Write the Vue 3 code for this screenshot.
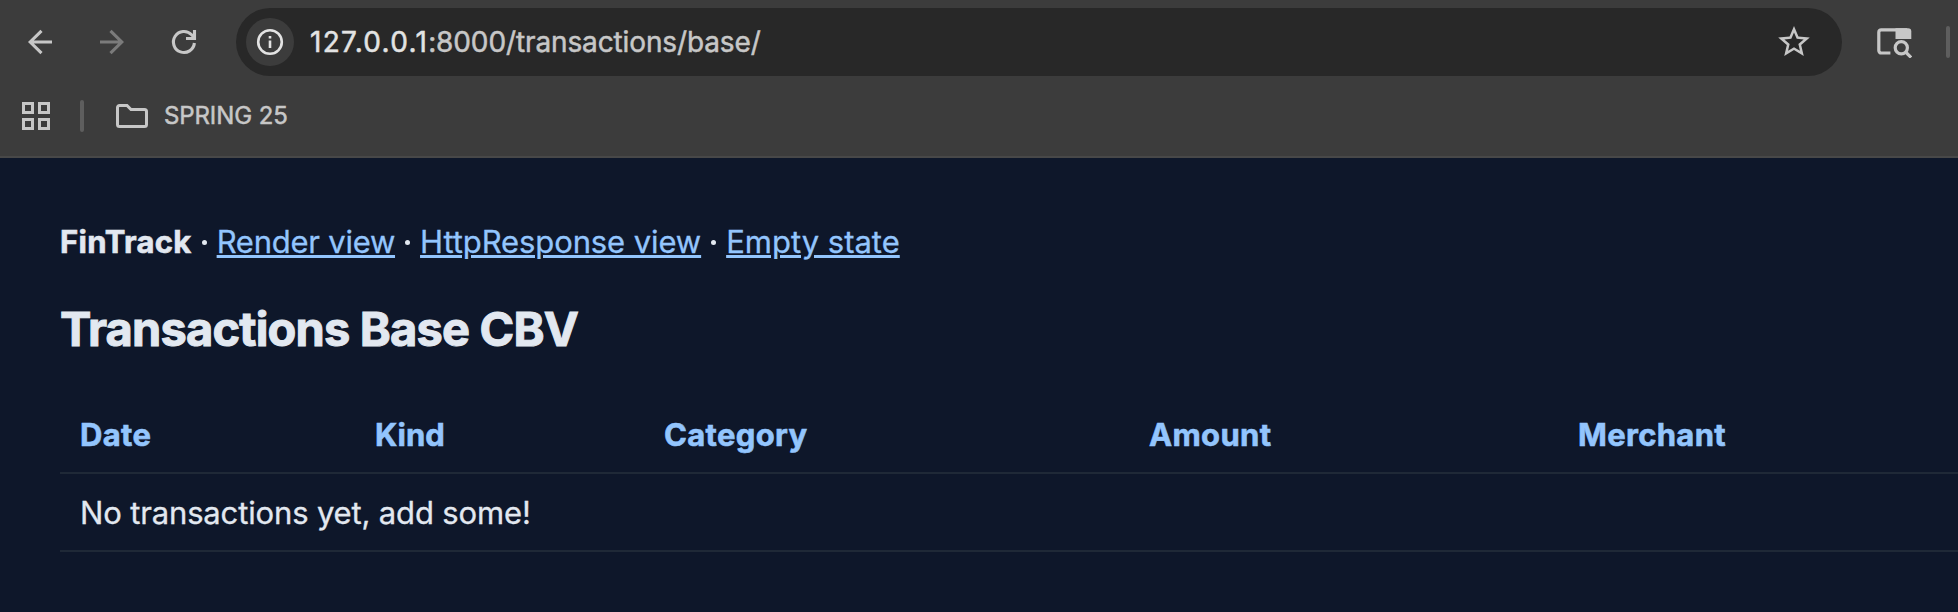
<script setup>
const links = [
  { label: 'Render view', cls: 'l1' },
  { label: 'HttpResponse view', cls: 'l2' },
  { label: 'Empty state', cls: 'l3' },
]
const columns = ['Date', 'Kind', 'Category', 'Amount', 'Merchant']
</script>

<template>
  <div class="window">
    <header class="chrome">
      <div class="toolbar">
        <svg class="nav-icon" viewBox="0 0 32 32"><path d="M28 16H6M17.5 4.8L6.2 16l11.3 11.2" /></svg>
        <svg class="nav-icon dim" viewBox="0 0 32 32"><path d="M4 16h22M14.5 4.8L25.8 16 14.5 27.2" /></svg>
        <svg class="nav-icon" viewBox="0 0 32 32"><path d="M26.4 17A10.5 10.5 0 1 1 23.6 8.8L26 11.3M26.5 4v8.5H18" /></svg>
        <div class="omnibox">
          <span class="site-info">
            <svg viewBox="0 0 28 28"><circle cx="14" cy="14" r="11.8" /><path d="M14 12.6v7.4M14 8v2.6" /></svg>
          </span>
          <span class="url"><span class="host">127.0.0.1</span><span>:8000/transactions/base/</span></span>
          <svg class="star" viewBox="2 2 20 19"><path d="M22 9.24l-7.19-.62L12 2 9.19 8.63 2 9.24l5.46 4.73L5.82 21 12 17.27 18.18 21l-1.63-7.03zM12 15.4l-3.76 2.27 1-4.28-3.32-2.88 4.38-.38L12 6.1l1.71 4.04 4.38.38-3.32 2.88 1 4.28z" /></svg>
        </div>
        <svg class="tabsearch" viewBox="0 0 36 32">
          <path d="M14.4 27H5.200a2.4 2.4 0 0 1-2.4-2.4V6.2A2.4 2.4 0 0 1 5.200 3.800H31" />
          <path class="solid" d="M19.500 2.200H32A3.300 3.300 0 0 1 35.300 5.500V12.900H19.500z" />
          <circle cx="25.300" cy="21.800" r="6.100" />
          <path d="M29.600 26l5.500 5.500" />
        </svg>
        <span class="divider"></span>
      </div>
      <div class="bookmarks">
        <svg class="apps" viewBox="0 0 28 28"><path d="M1.500 1.500h9v9h-9zM17.500 1.500h9v9h-9zM1.500 17.500h9v9h-9zM17.500 17.500h9v9h-9z" /></svg>
        <span class="divider"></span>
        <svg class="folder" viewBox="0 0 32 24"><path d="M3.500 1.500H11l4 4H28.500a2 2 0 0 1 2 2V20.500a2 2 0 0 1-2 2h-25a2 2 0 0 1-2-2v-17a2 2 0 0 1 2-2z" /></svg>
        <span class="folder-name">SPRING 25</span>
      </div>
    </header>
    <main class="page">
      <nav class="nav">
        <strong>FinTrack</strong>
        <template v-for="l in links" :key="l.label"><i class="dot"></i><a :class="l.cls" href="#">{{ l.label }}</a></template>
      </nav>
      <h1>Transactions Base CBV</h1>
      <table>
        <thead><tr><th v-for="c in columns" :key="c" :class="c.toLowerCase()">{{ c }}</th></tr></thead>
        <tbody><tr><td colspan="5">No transactions yet, add some!</td></tr></tbody>
      </table>
    </main>
  </div>
</template>

<style>
body { background: #0e172a; overflow: hidden; }
</style>
<style scoped>
.window { width: 100%; height: 612px; overflow: hidden; box-sizing: border-box; font-family: Inter, "Liberation Sans", sans-serif; background: #0e172a; }
.chrome { height: 158px; box-sizing: border-box; background: #3c3c3c; border-bottom: 2px solid #484848; }
.toolbar { display: flex; align-items: center; height: 68px; padding: 8px 0 0 24px; }
svg { display: block; flex: none; fill: none; stroke: #c7c7c7; }
.nav-icon { width: 32px; height: 32px; margin-right: 40px; stroke-width: 3.1; }
.dim { stroke: #7b7b7b; }
.omnibox { display: flex; align-items: center; box-sizing: border-box; width: 1606px; height: 68px; margin-left: -4px; padding: 0 32px 0 10px; border-radius: 34px; background: #282828; }
.site-info { display: flex; align-items: center; justify-content: center; width: 48px; height: 48px; border-radius: 50%; background: #3c3c3c; }
.site-info svg { width: 28px; height: 28px; stroke: #e3e3e3; stroke-width: 2.6; }
.url { flex: 1; margin-left: 16px; font-size: 28px; line-height: 40px; color: #c7c7c7; white-space: nowrap; letter-spacing: -0.12px; -webkit-text-stroke: 0.5px; }
.host { color: #e3e3e3; letter-spacing: 1.3px; }
.star { width: 32px; height: 30px; margin-bottom: 2px; fill: #c7c7c7; stroke: none; }
.tabsearch { width: 36px; height: 32px; margin-left: 34px; stroke-width: 3.2; }
.solid { fill: #c7c7c7; stroke: none; }
.divider { flex: none; width: 4px; height: 32px; border-radius: 2px; background: #5e5e5e; }
.toolbar .divider { margin-left: 34px; }
.bookmarks { display: flex; align-items: center; height: 80px; padding-left: 22px; }
.apps { width: 28px; height: 28px; stroke-width: 3; }
.bookmarks .divider { margin: 0 32px 0 30px; }
.folder { width: 32px; height: 24px; stroke-width: 3; }
.folder-name { margin: 0 0 1px 16px; font-size: 24px; letter-spacing: -0.1px; color: #c7c7c7; -webkit-text-stroke: 0.5px; }
.page { padding: 60px 0 0 60px; color: #e2e8f0; }
.nav { display: flex; align-items: center; height: 48px; font-size: 31px; line-height: 48px; white-space: nowrap; -webkit-text-stroke: 0.3px; }
.nav strong { letter-spacing: 0.32px; -webkit-text-stroke: 0.6px; }
a { color: #93c5fd; text-decoration-thickness: 3px; text-underline-offset: 2px; }
.l1 { letter-spacing: -0.25px; }
.l2 { letter-spacing: -0.1px; }
.dot { width: 5px; height: 5px; border-radius: 50%; background: #e2e8f0; margin: 0 10px; }
h1 { margin: 35px 0 0; font-size: 47px; line-height: 56px; font-weight: 700; letter-spacing: -0.82px; -webkit-text-stroke: 1px; }
table { width: 1958px; margin-top: 39px; border-collapse: separate; border-spacing: 0; table-layout: fixed; }
th, td { height: 75px; padding: 1px 20px 0; font-size: 31px; line-height: 48px; text-align: left; border-bottom: 2px solid #1f2937; white-space: nowrap; }
th { color: #93c5fd; font-weight: 700; letter-spacing: 0.32px; -webkit-text-stroke: 0.6px; }
td { letter-spacing: -0.15px; -webkit-text-stroke: 0.3px; }
.date { width: 255px; }
.kind { width: 249px; letter-spacing: 0; }
.category { width: 445px; }
.amount { width: 389px; }
</style>
